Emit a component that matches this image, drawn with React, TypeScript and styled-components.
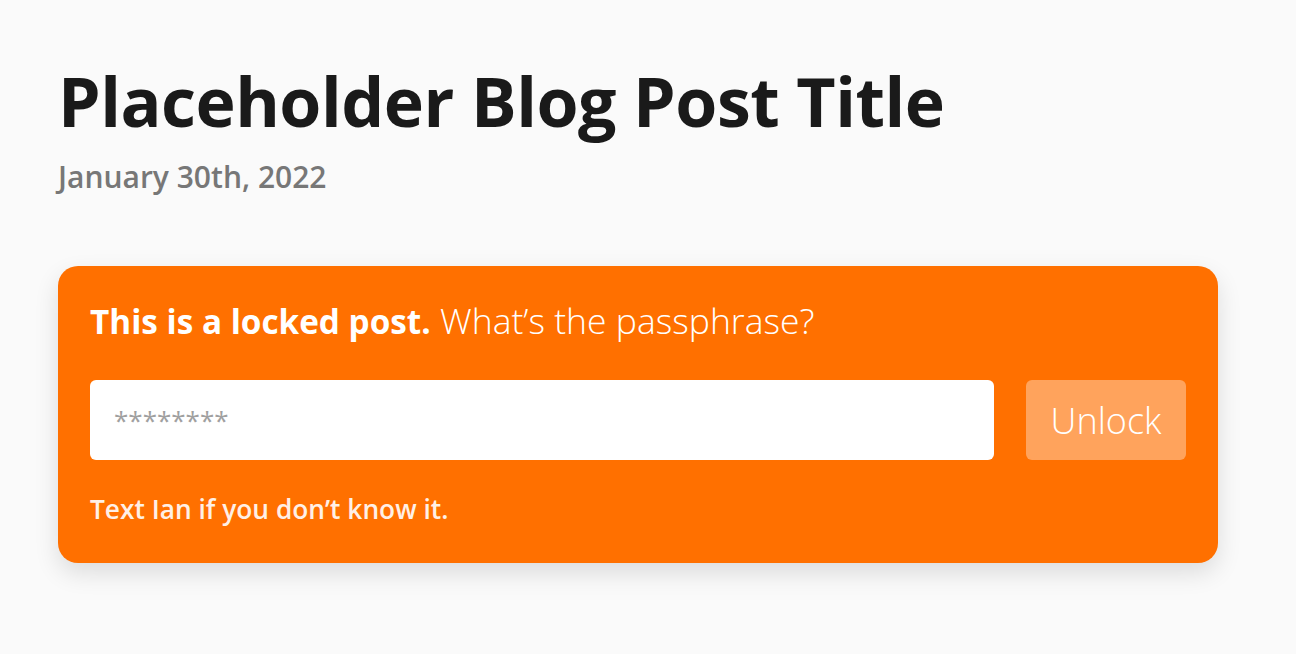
import React from "react";
import styled, { createGlobalStyle } from "styled-components";

const Global = createGlobalStyle`
  html, body { margin: 0; padding: 0; background: #fafafa; }
  body { font-family: "Open Sans", "Noto Sans", sans-serif; }
  * { box-sizing: border-box; }
`;

const Page = styled.main`
  padding: 56px 78px 80px 58px;
  display: flex;
  flex-direction: column;
`;

const Title = styled.h1`
  margin: 0;
  font-size: 68px;
  line-height: 90px;
  font-weight: 700;
  color: #1a1a1a;
  letter-spacing: -0.5px;
`;

const DateLine = styled.p`
  margin: 11px 0 0;
  font-size: 30px;
  line-height: 40px;
  font-weight: 600;
  color: #777777;
`;

const Card = styled.section`
  margin-top: 69px;
  background: #ff7000;
  border-radius: 20px;
  padding: 32px 32px 37px;
  box-shadow: 0 10px 24px rgba(0, 0, 0, 0.12);
  display: flex;
  flex-direction: column;
  color: #ffffff;
`;

const Prompt = styled.p`
  margin: 0;
  height: 44px;
  font-size: 35.5px;
  line-height: 44px;
  font-weight: 300;
`;

const Strong = styled.b`
  font-size: 33.3px;
  font-weight: 700;
`;

const Row = styled.form`
  margin-top: 38px;
  display: flex;
  gap: 32px;
  align-items: stretch;
`;

const Input = styled.input`
  flex: 1;
  height: 80px;
  border: none;
  border-radius: 6px;
  background: #ffffff;
  padding: 0 24px;
  font-family: inherit;
  font-size: 26px;
  color: #333;
  outline: none;
  &::placeholder { color: #a0a0a0; }
`;

const Button = styled.button`
  width: 160px;
  height: 80px;
  border: none;
  border-radius: 6px;
  background: rgba(255, 255, 255, 0.36);
  color: #ffffff;
  font-family: inherit;
  font-size: 36px;
  font-weight: 300;
  cursor: pointer;
`;

const Hint = styled.p`
  margin: 32px 0 0;
  font-size: 26.3px;
  line-height: 34px;
  font-weight: 600;
  color: #fff0e6;
`;

export default function App() {
  return (
    <>
      <Global />
      <Page>
        <Title>Placeholder Blog Post Title</Title>
        <DateLine>January 30th, 2022</DateLine>
        <Card>
          <Prompt>
            <Strong>This is a locked post.</Strong> What’s the passphrase?
          </Prompt>
          <Row onSubmit={(e) => e.preventDefault()}>
            <Input type="password" placeholder="********" />
            <Button type="submit">Unlock</Button>
          </Row>
          <Hint>Text Ian if you don’t know it.</Hint>
        </Card>
      </Page>
    </>
  );
}
